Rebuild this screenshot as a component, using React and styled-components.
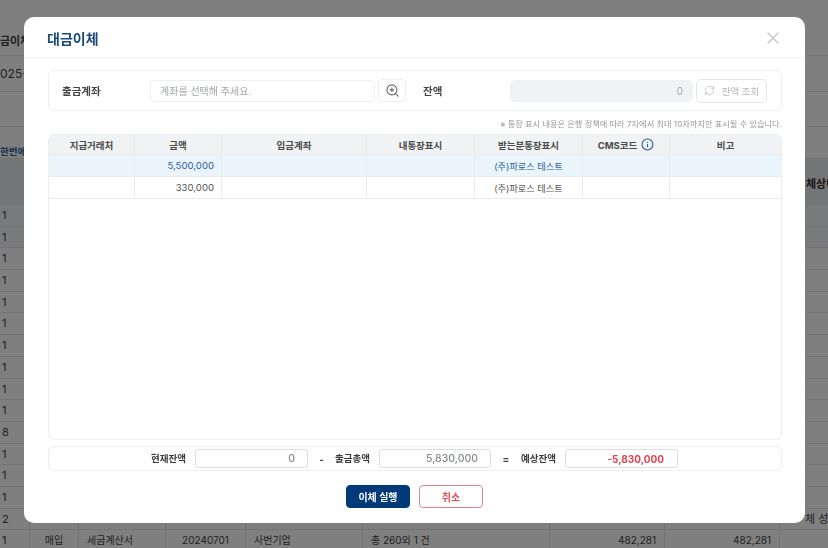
import styled, { createGlobalStyle } from 'styled-components';
import { Info, RefreshCw, X, ZoomIn } from 'lucide-react';

const GlobalStyle = createGlobalStyle`
  html, body {
    margin: 0;
    height: 100%;
    overflow: hidden;
    background: #fff;
    font-family: Inter, "Noto Sans CJK KR", "Noto Sans", sans-serif;
    color: #333;
  }
  * { box-sizing: border-box; }
`;

/* page behind the dialog */
const Page = styled.div`
  width: 828px;
  height: 548px;
  overflow: hidden;
  font-size: 10px;
  color: #444;
`;

const TopBand = styled.div`
  height: ${(p) => p.$h}px;
  padding-top: ${(p) => p.$top || 0}px;
  border-bottom: 1px solid #e6e6e6;
  background: ${(p) => p.$bg || '#fff'};
  white-space: nowrap;
  font-size: ${(p) => p.$size || 11}px;
  font-weight: ${(p) => p.$weight || 400};
  color: ${(p) => p.$color || '#444'};
`;

const HeadBand = styled.div`
  height: 46px;
  background: #e9ebec;
  display: flex;
  align-items: center;
  padding: 2px 0 0 806px;
  font-size: 11px;
  font-weight: 700;
  color: #333;
  white-space: nowrap;
  overflow: hidden;
`;

const BgRow = styled.div`
  height: 21.7px;
  display: grid;
  grid-template-columns: 30px 49px 87px 80px 117px 187px 115px 115px 48px;
  border-bottom: 1px solid #e6e6e6;
  background: ${(p) => (p.$tint ? '#f1f5f8' : '#fff')};
  white-space: nowrap;
  overflow: hidden;
  line-height: 21px;
`;

const BgCell = styled.div`
  border-right: 1px solid #e6e6e6;
  padding: 0 8px;
  text-align: ${(p) => p.$align || 'left'};
  &:first-child { padding: 0 0 0 2px; font-size: 11px; }
  &:last-child { border-right: 0; padding: 0 0 0 25px; font-size: 11px; }
`;

/* dialog */
const Overlay = styled.div`
  position: fixed;
  inset: 0;
  background: rgba(0, 0, 0, 0.5);
  padding: 17px 0 0 24px;
`;

const Modal = styled.section`
  width: 781px;
  height: 506px;
  background: #fff;
  border-radius: 10px;
  display: flex;
  flex-direction: column;
  overflow: hidden;
`;

const ModalHeader = styled.header`
  height: 41px;
  flex: none;
  padding: 1px 22px 0 23px;
  display: flex;
  align-items: center;
  justify-content: space-between;
  border-bottom: 1px solid #f2f3f4;
`;

const Title = styled.h2`
  margin: 0;
  font-size: 14px;
  font-weight: 700;
  color: #1a4a7e;
`;

const CloseButton = styled.button`
  border: 0;
  background: none;
  padding: 0;
  display: flex;
  color: #c8cacd;
`;

const ModalBody = styled.div`
  flex: 1;
  padding: 12px 23px 15px 24px;
  display: flex;
  flex-direction: column;
`;

const AccountPanel = styled.div`
  height: 41px;
  flex: none;
  border: 1px solid #eceef0;
  border-radius: 6px;
  display: flex;
  align-items: center;
  padding-left: 13px;
`;

const Label = styled.span`
  font-size: 10.5px;
  font-weight: 700;
  color: #444;
  white-space: nowrap;
  width: ${(p) => p.$w}px;
  flex: none;
`;

const TextBox = styled.div`
  height: 22px;
  width: ${(p) => p.$w}px;
  flex: none;
  border: 1px solid ${(p) => (p.$disabled ? '#f0f1f2' : '#eceef0')};
  border-radius: 5px;
  background: ${(p) => (p.$disabled ? '#f1f2f3' : '#fff')};
  display: flex;
  align-items: center;
  justify-content: ${(p) => (p.$right ? 'flex-end' : 'flex-start')};
  padding: 0 9px;
  font-size: 10px;
  color: #a3a6aa;
`;

const IconButton = styled.button`
  width: 28px;
  height: 23px;
  margin: 0 17px 0 3px;
  flex: none;
  border: 1px solid #eceef0;
  border-radius: 5px;
  background: #fff;
  padding: 0;
  display: flex;
  align-items: center;
  justify-content: center;
  color: #63676c;
`;

const RefreshButton = styled.button`
  width: 71px;
  height: 24px;
  margin-left: 3px;
  flex: none;
  border: 1px solid #e3e5e8;
  border-radius: 5px;
  background: #fff;
  padding: 0;
  display: flex;
  align-items: center;
  justify-content: center;
  gap: 7px;
  font-family: inherit;
  font-size: 9.5px;
  color: #b5b8bc;
  white-space: nowrap;
`;

const Note = styled.p`
  margin: 0;
  height: 23px;
  flex: none;
  display: flex;
  align-items: center;
  justify-content: flex-end;
  font-size: 8.2px;
  color: #96999d;
  white-space: nowrap;
`;

const GridWrap = styled.div`
  height: 306px;
  flex: none;
  border: 1px solid #eceef0;
  border-radius: 6px;
  overflow: hidden;
`;

const GridRow = styled.div`
  display: grid;
  grid-template-columns: 86px 87px 145px 108px 108px 87px 1fr;
  height: ${(p) => p.$h}px;
  background: ${(p) => p.$bg || '#fff'};
  border-bottom: 1px solid #e9ebed;
  color: ${(p) => p.$color || '#555'};
`;

const HeadCell = styled.div`
  border-right: 1px solid #e6e8ea;
  display: flex;
  align-items: center;
  justify-content: center;
  gap: 4px;
  font-size: 9.5px;
  font-weight: 700;
  color: #4a4a4a;
  white-space: nowrap;
  &:last-child { border-right: 0; }
`;

const Cell = styled.div`
  border-right: 1px solid #e9ebed;
  display: flex;
  align-items: center;
  justify-content: ${(p) => (p.$right ? 'flex-end' : 'center')};
  padding: ${(p) => (p.$right ? '0 7px 0 0' : '0')};
  font-size: ${(p) => (p.$right ? 9.6 : 9.2)}px;
  white-space: nowrap;
  &:last-child { border-right: 0; }
`;

const InfoIcon = styled(Info)`
  color: #1c5a9c;
`;

const SummaryBar = styled.div`
  height: 25px;
  margin-top: 6px;
  flex: none;
  border: 1px solid #eceef0;
  border-radius: 6px;
  display: flex;
  align-items: center;
  padding-left: 102px;
`;

const SummaryLabel = styled.span`
  width: 35px;
  flex: none;
  margin: 0 9px 2px 0;
  font-size: 9.5px;
  font-weight: 700;
  color: #3a3a3a;
  white-space: nowrap;
`;

const SummaryBox = styled.div`
  width: ${(p) => p.$w}px;
  height: 19px;
  flex: none;
  border: 1px solid #dcdee1;
  border-radius: 3px;
  display: flex;
  align-items: center;
  justify-content: flex-end;
  padding-right: ${(p) => (p.$danger ? 13 : 12)}px;
  font-size: ${(p) => (p.$danger ? 10 : 10.5)}px;
  font-weight: ${(p) => (p.$danger ? 700 : 500)};
  color: ${(p) => (p.$danger ? '#e5404c' : '#85888c')};
`;

const Operator = styled.span`
  width: ${(p) => p.$w}px;
  flex: none;
  text-align: center;
  font-size: 10px;
  font-weight: 700;
  color: #444;
`;

const Actions = styled.div`
  margin-top: 14px;
  padding-right: 1px;
  display: flex;
  justify-content: center;
  gap: 9px;
`;

const ActionButton = styled.button`
  width: 64px;
  height: 23px;
  border-radius: 4px;
  border: 1px solid ${(p) => (p.$primary ? '#003a78' : '#e8808a')};
  background: ${(p) => (p.$primary ? '#003a78' : '#fff')};
  color: ${(p) => (p.$primary ? '#fff' : '#e8505b')};
  font-family: inherit;
  font-size: 10px;
  font-weight: 700;
  padding: 0;
`;

const leftDigits = ['1', '1', '1', '1', '1', '1', '1', '1', '1', '1', '8', '1', '1', '1', '2'];
const gridHeads = ['지급거래처', '금액', '입금계좌', '내통장표시', '받는분통장표시', 'CMS코드', '비고'];
const rows = [
  { amount: '5,500,000', bg: '#eaf4fb', color: '#2a5f9e', h: 22 },
  { amount: '330,000', h: 22 },
];

function Backdrop() {
  return (
    <Page>
      <TopBand $h={56} $top={32} $weight={700}>금이체</TopBand>
      <TopBand $h={36} $top={10} $size={12}>025-1</TopBand>
      <TopBand $h={35} />
      <TopBand $h={32} $top={17} $size={9.5} $weight={700} $color="#2a5f9e">한번에</TopBand>
      <HeadBand>체상태</HeadBand>
      {leftDigits.map((digit, i) => (
        <BgRow key={i} $tint={i < 2}>
          <BgCell>{digit}</BgCell>
          {Array.from({ length: 7 }, (_, c) => (
            <BgCell key={c} />
          ))}
          <BgCell>{i === 14 ? '체 성공' : ''}</BgCell>
        </BgRow>
      ))}
      <BgRow>
        <BgCell>1</BgCell>
        <BgCell $align="center">매입</BgCell>
        <BgCell>세금계산서</BgCell>
        <BgCell $align="center">20240701</BgCell>
        <BgCell>사번기업</BgCell>
        <BgCell>총 260외 1 건</BgCell>
        <BgCell $align="right">482,281</BgCell>
        <BgCell $align="right">482,281</BgCell>
        <BgCell />
      </BgRow>
    </Page>
  );
}

export default function App() {
  return (
    <>
      <GlobalStyle />
      <Backdrop />
      <Overlay>
        <Modal>
          <ModalHeader>
            <Title>대금이체</Title>
            <CloseButton aria-label="닫기">
              <X size={20} strokeWidth={1.8} />
            </CloseButton>
          </ModalHeader>
          <ModalBody>
            <AccountPanel>
              <Label $w={88}>출금계좌</Label>
              <TextBox $w={225}>계좌를 선택해 주세요.</TextBox>
              <IconButton aria-label="계좌 검색">
                <ZoomIn size={15} strokeWidth={1.7} />
              </IconButton>
              <Label $w={87}>잔액</Label>
              <TextBox $w={183} $right $disabled>0</TextBox>
              <RefreshButton>
                <RefreshCw size={11} strokeWidth={1.6} />
                잔액 조회
              </RefreshButton>
            </AccountPanel>
            <Note>※ 통장 표시 내용은 은행 정책에 따라 7자에서 최대 10자까지만 표시될 수 있습니다.</Note>
            <GridWrap>
              <GridRow $h={20} $bg="#f1f2f3">
                {gridHeads.map((head) => (
                  <HeadCell key={head}>
                    {head}
                    {head === 'CMS코드' && <InfoIcon size={13} strokeWidth={2} />}
                  </HeadCell>
                ))}
              </GridRow>
              {rows.map((row) => (
                <GridRow key={row.amount} $h={row.h} $bg={row.bg} $color={row.color}>
                  <Cell />
                  <Cell $right>{row.amount}</Cell>
                  <Cell />
                  <Cell />
                  <Cell>(주)파로스 테스트</Cell>
                  <Cell />
                  <Cell />
                </GridRow>
              ))}
            </GridWrap>
            <SummaryBar>
              <SummaryLabel>현재잔액</SummaryLabel>
              <SummaryBox $w={113}>0</SummaryBox>
              <Operator $w={27}>-</Operator>
              <SummaryLabel>출금총액</SummaryLabel>
              <SummaryBox $w={112}>5,830,000</SummaryBox>
              <Operator $w={30}>=</Operator>
              <SummaryLabel>예상잔액</SummaryLabel>
              <SummaryBox $w={113} $danger>-5,830,000</SummaryBox>
            </SummaryBar>
            <Actions>
              <ActionButton $primary>이체 실행</ActionButton>
              <ActionButton>취소</ActionButton>
            </Actions>
          </ModalBody>
        </Modal>
      </Overlay>
    </>
  );
}
